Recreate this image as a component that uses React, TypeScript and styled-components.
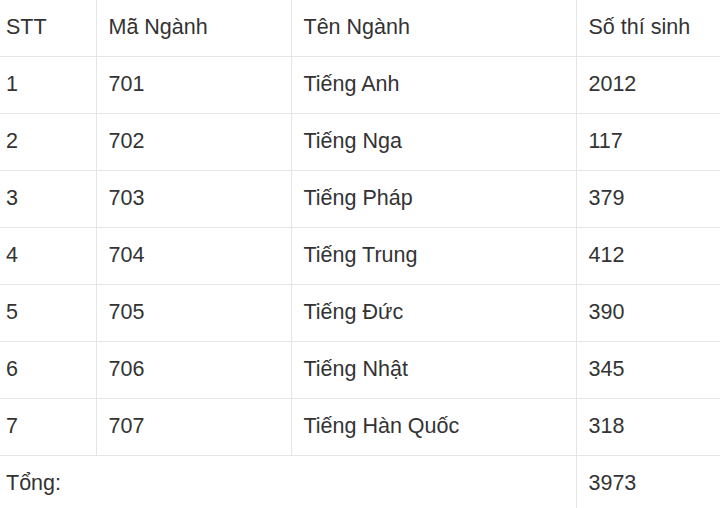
import React from "react";
import styled, { createGlobalStyle } from "styled-components";

const GlobalStyle = createGlobalStyle`
  html, body {
    margin: 0;
    padding: 0;
    background: #ffffff;
    overflow: hidden;
  }
`;

const Table = styled.table`
  border-collapse: collapse;
  table-layout: fixed;
  width: 740px;
  margin-left: -6px;
  margin-top: -1px;
  font-family: "Liberation Sans", Arial, sans-serif;
  font-size: 21.5px;
  color: #333333;
`;

const Cell = styled.td<{ $head?: boolean }>`
  height: 54px;
  padding: 0 12px 2px 12px;
  vertical-align: middle;
  text-align: left;
  font-weight: normal;
  border-top: 1px solid #e6e6e6;
  border-left: 1px solid #e6e6e6;
  border-top-color: ${(p) => (p.$head ? "transparent" : "#e6e6e6")};
  &:first-child {
    border-left: none;
  }
`;

interface Major {
  code: string;
  name: string;
  count: number;
}

const majors: Major[] = [
  { code: "701", name: "Tiếng Anh", count: 2012 },
  { code: "702", name: "Tiếng Nga", count: 117 },
  { code: "703", name: "Tiếng Pháp", count: 379 },
  { code: "704", name: "Tiếng Trung", count: 412 },
  { code: "705", name: "Tiếng Đức", count: 390 },
  { code: "706", name: "Tiếng Nhật", count: 345 },
  { code: "707", name: "Tiếng Hàn Quốc", count: 318 },
];

const App = () => {
  const total = majors.reduce((s, m) => s + m.count, 0);
  return (
    <>
      <GlobalStyle />
      <Table>
        <colgroup>
          <col style={{ width: 102 }} />
          <col style={{ width: 195 }} />
          <col style={{ width: 285 }} />
          <col style={{ width: 158 }} />
        </colgroup>
        <thead>
          <tr>
            <Cell as="th" $head>STT</Cell>
            <Cell as="th" $head>Mã Ngành</Cell>
            <Cell as="th" $head>Tên Ngành</Cell>
            <Cell as="th" $head>Số thí sinh</Cell>
          </tr>
        </thead>
        <tbody>
          {majors.map((m, i) => (
            <tr key={m.code}>
              <Cell>{i + 1}</Cell>
              <Cell>{m.code}</Cell>
              <Cell>{m.name}</Cell>
              <Cell>{m.count}</Cell>
            </tr>
          ))}
          <tr>
            <Cell colSpan={3}>Tổng:</Cell>
            <Cell>{total}</Cell>
          </tr>
        </tbody>
      </Table>
    </>
  );
};

export default App;
